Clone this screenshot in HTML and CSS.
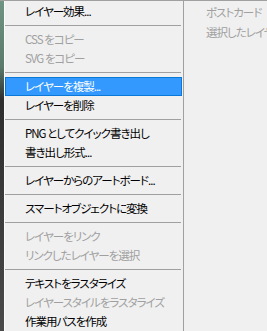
FILE: index.html
```html
<!DOCTYPE html>
<html lang="ja">
<head>
    <meta charset="UTF-8">
    <title>レイヤーメニュー</title>
    <link rel="stylesheet" href="styles.css">
</head>
<body>
    <div class="screen">
        <div class="desk"></div>

        <div class="menu">
            <div class="item">レイヤー効果...</div>
            <div class="sep"></div>
            <div class="item off">CSS をコピー</div>
            <div class="item off">SVG をコピー</div>
            <div class="sep"></div>
            <div class="item active">レイヤーを複製...</div>
            <div class="item">レイヤーを削除</div>
            <div class="sep"></div>
            <div class="item">PNG としてクイック書き出し</div>
            <div class="item">書き出し形式...</div>
            <div class="sep"></div>
            <div class="item">レイヤーからのアートボード...</div>
            <div class="sep"></div>
            <div class="item">スマートオブジェクトに変換</div>
            <div class="sep"></div>
            <div class="item off">レイヤーをリンク</div>
            <div class="item off">リンクしたレイヤーを選択</div>
            <div class="sep"></div>
            <div class="item">テキストをラスタライズ</div>
            <div class="item off">レイヤースタイルをラスタライズ</div>
            <div class="item">作業用パスを作成</div>
        </div>

        <div class="divider"></div>

        <div class="panel">
            <div class="panel-item">ポストカード</div>
            <div class="panel-item">選択したレイヤーから新規 3D 押し出し</div>
        </div>
    </div>
</body>
</html>
```

FILE: styles.css
```css
body {
    margin: 0;
    background: #f0f0f0;
    font-family: "Noto Sans CJK JP", "Noto Sans", sans-serif;
    font-size: 11.5px;
    letter-spacing: -1px;
    font-feature-settings: "palt";
    overflow: hidden;
}
.screen {
    display: flex;
    height: 331px;
    border-top: 1px solid #a0a0a0;
    box-sizing: border-box;
}
.desk {
    width: 4px;
    flex: none;
    background: linear-gradient(180deg, #6f9482 0%, #5b7a6c 20%, #2e2e2e 30%, #3a3a3a 60%, #4a4a4a 100%);
}
.menu {
    width: 177px;
    flex: none;
    border-left: 1px solid #fbfbfb;
    padding-top: 1px;
    padding-right: 1px;
}
.item {
    height: 19px;
    line-height: 19px;
    padding-left: 20px;
    color: #000;
    white-space: nowrap;
    overflow: hidden;
    box-sizing: border-box;
}
.item.off {
    color: #a0a0a0;
}
.item.active {
    background: #3399ff;
    border: 1px solid #0a78d7;
    line-height: 17px;
    padding-left: 19px;
    color: #fff;
}
.sep {
    height: 1px;
    margin: 4px 1px 4px 0;
    background: #a0a0a0;
}
.divider {
    width: 1px;
    flex: none;
    background: #a0a0a0;
}
.panel {
    flex: 1;
    padding: 1px 0 0 22px;
    overflow: hidden;
}
.panel-item {
    height: 20px;
    line-height: 20px;
    color: #a0a0a0;
    white-space: nowrap;
}
```
